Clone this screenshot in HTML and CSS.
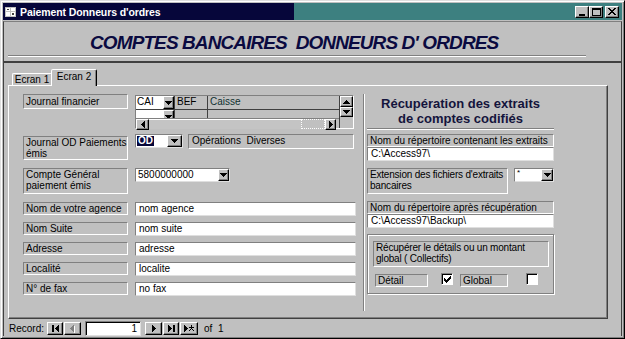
FILE: index.html
```html
<!DOCTYPE html>
<html lang="fr">
<head>
    <meta charset="UTF-8">
    <title>Paiement Donneurs d'ordres</title>
    <link rel="stylesheet" href="styles.css">
</head>
<body>

<div class="window">
    <!-- Barre de titre -->
    <div class="titlebar">
        <svg class="app-icon" width="11" height="10" viewBox="0 0 11 10" shape-rendering="crispEdges">
            <rect x="0" y="0" width="11" height="10" fill="#c0c0c0"/>
            <rect x="1" y="1" width="4" height="3" fill="#fff"/>
            <rect x="6" y="1" width="4" height="3" fill="#fff"/>
            <rect x="1" y="5" width="4" height="4" fill="#fff"/>
            <rect x="6" y="5" width="4" height="4" fill="#fff"/>
            <rect x="2" y="2" width="2" height="1" fill="#404040"/>
            <rect x="7" y="6" width="2" height="2" fill="#404040"/>
        </svg>
        <span class="title">Paiement Donneurs d'ordres</span>
        <div class="caption-btns">
            <span class="cbtn"><svg width="8" height="8" shape-rendering="crispEdges"><rect x="1" y="6" width="6" height="2"/></svg></span>
            <span class="cbtn"><svg width="9" height="8" shape-rendering="crispEdges"><path fill-rule="evenodd" d="M0 0h9v8H0zM1 2v5h7V2z"/></svg></span>
            <span class="cbtn close"><svg width="8" height="7" shape-rendering="crispEdges"><path d="M0 0h2v1h1v1h2v-1h1v-1h2v1h-1v1h-1v1h-1v1h1v1h1v1h1v1h-2v-1h-1v-1h-2v1h-1v1h-2v-1h1v-1h1v-1h1v-1h-1v-1h-1v-1h-1z"/></svg></span>
        </div>
    </div>

    <div class="client">
        <!-- En-tête du formulaire -->
        <div class="form-header">
            <h1>COMPTES BANCAIRES&nbsp; DONNEURS D' ORDRES</h1>
            <div class="etched-line"></div>
        </div>
        <div class="separator"></div>

        <!-- Détail -->
        <div class="detail">
            <div class="tabs">
                <div class="tab">Ecran 1</div>
                <div class="tab active">Ecran 2</div>
            </div>
            <div class="tab-panel">
                <div class="col-left">
                    <div class="row r-journal">
                        <div class="lbl lbl-tall">Journal financier</div>
                        <div class="datasheet">
                            <div class="ds-main">
                                <div class="ds-row">
                                    <div class="ds-code"><span class="ds-val">CAI</span><span class="ds-drop"><svg width="7" height="4" shape-rendering="crispEdges"><path d="M0 0h7v1h-1v1h-1v1h-1v1h-1v-1h-1v-1h-1v-1h-1z"/></svg></span></div>
                                    <div class="ds-dev">BEF</div>
                                    <div class="ds-lib">Caisse</div>
                                </div>
                                <div class="ds-row ds-blank">
                                    <div class="ds-code"><span class="ds-val"></span><span class="ds-drop"><svg width="7" height="4" shape-rendering="crispEdges"><path d="M0 0h7v1h-1v1h-1v1h-1v1h-1v-1h-1v-1h-1v-1h-1z"/></svg></span></div>
                                    <div class="ds-dev"></div>
                                    <div class="ds-lib"></div>
                                </div>
                                <div class="ds-hscroll">
                                    <span class="sb-btn sb-left"><svg width="4" height="7" shape-rendering="crispEdges"><path d="M3 0h1v7h-1v-1h-1v-1h-1v-1h-1v-1h1v-1h1v-1h1z"/></svg></span>
                                    <span class="sb-track"></span>
                                    <span class="sb-thumb"></span>
                                    <span class="sb-btn sb-right"><svg width="4" height="7" shape-rendering="crispEdges"><path d="M0 0h1v1h1v1h1v1h1v1h-1v1h-1v1h-1v1h-1z"/></svg></span>
                                </div>
                            </div>
                            <div class="ds-vscroll">
                                <span class="sb-btn sb-up"><svg width="7" height="4" shape-rendering="crispEdges"><path d="M3 0h1v1h1v1h1v1h1v1h-7v-1h1v-1h1v-1h1z"/></svg></span>
                                <span class="sb-btn sb-down"><svg width="7" height="4" shape-rendering="crispEdges"><path d="M0 0h7v1h-1v1h-1v1h-1v1h-1v-1h-1v-1h-1v-1h-1z"/></svg></span>
                            </div>
                        </div>
                    </div>

                    <div class="row r-od">
                        <div class="lbl lbl2">Journal OD Paiements émis</div>
                        <div class="combo c-od">
                            <span class="sel">OD</span>
                            <span class="drop"><svg width="7" height="4" shape-rendering="crispEdges"><path d="M0 0h7v1h-1v1h-1v1h-1v1h-1v-1h-1v-1h-1v-1h-1z"/></svg></span>
                        </div>
                        <div class="desc">Opérations&nbsp; Diverses</div>
                    </div>

                    <div class="row r-compte">
                        <div class="lbl lbl2">Compte Général paiement émis</div>
                        <div class="combo c-compte">
                            <span class="val">5800000000</span>
                            <span class="drop"><svg width="7" height="4" shape-rendering="crispEdges"><path d="M0 0h7v1h-1v1h-1v1h-1v1h-1v-1h-1v-1h-1v-1h-1z"/></svg></span>
                        </div>
                    </div>

                    <div class="row r-first">
                        <div class="lbl">Nom de votre agence</div>
                        <div class="field">nom agence</div>
                    </div>
                    <div class="row">
                        <div class="lbl">Nom Suite</div>
                        <div class="field">nom suite</div>
                    </div>
                    <div class="row">
                        <div class="lbl">Adresse</div>
                        <div class="field">adresse</div>
                    </div>
                    <div class="row">
                        <div class="lbl">Localité</div>
                        <div class="field">localite</div>
                    </div>
                    <div class="row">
                        <div class="lbl">N° de fax</div>
                        <div class="field">no fax</div>
                    </div>
                </div>

                <div class="divider"></div>

                <div class="col-right">
                    <h2>Récupération des extraits de comptes codifiés</h2>
                    <div class="etched-line short"></div>

                    <div class="lbl full mt4">Nom du répertoire contenant les extraits</div>
                    <div class="field full">C:\Access97\</div>

                    <div class="ext-row">
                        <div class="lbl lbl2 ext-lbl">Extension des fichiers d'extraits bancaires</div>
                        <div class="combo c-ext">
                            <span class="val star">*</span>
                            <span class="drop"><svg width="7" height="4" shape-rendering="crispEdges"><path d="M0 0h7v1h-1v1h-1v1h-1v1h-1v-1h-1v-1h-1v-1h-1z"/></svg></span>
                        </div>
                    </div>

                    <div class="lbl full mt7">Nom du répertoire après récupération</div>
                    <div class="field full">C:\Access97\Backup\</div>

                    <div class="group">
                        <div class="lbl lbl2 group-lbl">Récupérer le détails ou un montant global ( Collectifs)</div>
                        <div class="check-row">
                            <div class="lbl chk-lbl lbl-detail">Détail</div>
                            <span class="checkbox checked"><svg width="7" height="7" shape-rendering="crispEdges"><path d="M6 0h1v3h-1v1h-1v1h-1v1h-1v1h-1v-1h-1v-1h-1v-3h1v1h1v1h1v-1h1v-1h1v-1h1z"/></svg></span>
                            <div class="lbl chk-lbl lbl-global">Global</div>
                            <span class="checkbox cb-global"></span>
                        </div>
                    </div>
                </div>
            </div>
        </div>

        <!-- Navigation des enregistrements -->
        <div class="nav">
            <span class="nav-label">Record:</span>
            <span class="nbtn"><svg width="7" height="7" shape-rendering="crispEdges"><rect x="0" y="0" width="2" height="7"/><path d="M6 0h1v7h-1v-1h-1v-1h-1v-1h-1v-1h1v-1h1v-1h1z"/></svg></span>
            <span class="nbtn n-prev"><svg width="5" height="8" shape-rendering="crispEdges"><path fill="#fff" d="M4 1h1v7h-1v-1h-1v-1h-1v-1h-1v-1h1v-1h1v-1h1z"/><path fill="#808080" d="M3 0h1v7h-1v-1h-1v-1h-1v-1h-1v-1h1v-1h1v-1h1z"/></svg></span>
            <span class="nbox">1</span>
            <span class="nbtn n-next"><svg width="4" height="7" shape-rendering="crispEdges"><path d="M0 0h1v1h1v1h1v1h1v1h-1v1h-1v1h-1v1h-1z"/></svg></span>
            <span class="nbtn"><svg width="7" height="7" shape-rendering="crispEdges"><path d="M0 0h1v1h1v1h1v1h1v1h-1v1h-1v1h-1v1h-1z"/><rect x="5" y="0" width="2" height="7"/></svg></span>
            <span class="nbtn n-new"><svg width="10" height="7" shape-rendering="crispEdges"><path d="M0 0h1v1h1v1h1v1h1v1h-1v1h-1v1h-1v1h-1z"/><path d="M7 0h1v2h2v1h-2v1h1v1h1v1h-1v-1h-1v-1h-1v1h-1v1h-1v-1h1v-1h1v-1h-2v-1h2z"/></svg></span>
            <span class="nav-of">of&nbsp; 1</span>
        </div>
    </div>
</div>

</body>
</html>
```

FILE: styles.css
```css
* { margin: 0; padding: 0; box-sizing: border-box; }

body {
    background: #c0c0c0;
    font-family: "Liberation Sans", Arial, sans-serif;
    font-size: 10px;
    color: #000;
}

/* Fenêtre */
.window {
    width: 625px;
    height: 339px;
    padding: 2px;
    border: 1px solid;
    border-color: #dfdfdf #000 #000 #dfdfdf;
    box-shadow: inset 1px 1px #fff, inset -1px -1px #808080;
    display: flex;
    flex-direction: column;
}

.titlebar {
    height: 17px;
    flex: none;
    display: flex;
    align-items: center;
    padding: 0 3px 0 2px;
    background: linear-gradient(to right, #06063a 0, #06063a 291px, #3d8080 291px);
    color: #fff;
}
.app-icon { display: block; }
.title { margin-left: 4px; font-weight: bold; font-size: 10.5px; letter-spacing: -0.1px; }

.caption-btns { margin-left: auto; display: flex; }
.cbtn {
    width: 14px;
    height: 12px;
    display: flex;
    align-items: center;
    justify-content: center;
    background: #c0c0c0;
    border: 1px solid;
    border-color: #fff #000 #000 #fff;
    box-shadow: inset -1px -1px #808080;
}
.cbtn svg { display: block; }
.cbtn.close { margin-left: 2px; }

.client {
    flex: 1;
    margin-top: 1px;
    border-top: 1px solid #808080;
    border-left: 1px solid #404040;
    border-right: 1px solid #404040;
    display: flex;
    flex-direction: column;
}

/* En-tête */
.form-header { height: 39px; padding-top: 11px; }
.form-header h1 {
    padding-left: 86px;
    font-size: 19px;
    line-height: 19px;
    font-style: italic;
    font-weight: bold;
    letter-spacing: -0.9px;
    color: #0a0a40;
    white-space: nowrap;
}
.etched-line {
    height: 2px;
    border-top: 1px solid #808080;
    border-bottom: 1px solid #fff;
}
.form-header .etched-line { margin: 3px 0 0 4px; width: 578px; }
.separator { height: 2px; background: #404040; }

/* Détail + onglets */
.detail { padding-left: 4px; }
.tabs { margin-top: 6px; height: 16px; padding-left: 4px; display: flex; align-items: flex-end; }
.tab {
    width: 40px;
    height: 12px;
    line-height: 11px;
    text-align: center;
    border: 1px solid;
    border-bottom: none;
    border-color: #fff #404040 transparent #fff;
    border-radius: 2px 2px 0 0;
}
.tab.active {
    width: 46px;
    height: 17px;
    line-height: 13px;
    margin-left: -1px;
    margin-bottom: -1px;
    position: relative;
    z-index: 1;
    background: #c0c0c0;
    border-right-color: #000;
    box-shadow: inset -1px 0 #808080;
}

.tab-panel {
    width: 600px;
    height: 234px;
    border: 1px solid;
    border-color: #fff #404040 #404040 #fff;
    box-shadow: inset -1px -1px #808080;
    padding: 8px 0 0 14px;
    display: flex;
    align-items: flex-start;
}

/* Contrôles communs */
.lbl {
    flex: none;
    height: 13px;
    padding-left: 2px;
    line-height: 11px;
    border: 1px solid;
    border-color: #808080 #fff #fff #808080;
    white-space: nowrap;
    overflow: hidden;
}
.lbl2 { white-space: normal; }
.field {
    height: 14px;
    padding-left: 3px;
    line-height: 12px;
    background: #fff;
    border: 1px solid;
    border-color: #808080 #dfdfdf #dfdfdf #808080;
    white-space: nowrap;
}
.combo {
    height: 14px;
    display: flex;
    background: #fff;
    border: 1px solid;
    border-color: #808080 #dfdfdf #dfdfdf #808080;
    line-height: 12px;
}
.combo .val { padding-left: 2px; }
.combo .drop, .ds-drop, .sb-btn {
    margin-left: auto;
    flex: none;
    display: flex;
    align-items: center;
    justify-content: center;
    background: #c0c0c0;
    border: 1px solid;
    border-color: #fff #000 #000 #fff;
    box-shadow: inset -1px -1px #808080;
}
.combo .drop { width: 12px; height: 12px; }
.combo svg, .ds-drop svg, .sb-btn svg { display: block; }

/* Colonne gauche */
.col-left { width: 333px; flex: none; }
.row { display: flex; align-items: flex-start; }
.row .lbl { width: 105px; }
.row .field { width: 221px; margin-left: 7px; }
.row + .row { margin-top: 6px; }

.r-journal .lbl-tall { height: 15px; line-height: 13px; }
.datasheet {
    margin: 1px 0 0 7px;
    width: 219px;
    height: 34px;
    display: flex;
    background: #c0c0c0;
    border: 1px solid;
    border-color: #808080 #fff #fff #808080;
}
.ds-main { width: 204px; border-right: 1px solid #404040; }
.ds-row { height: 14px; display: flex; border-bottom: 1px solid #404040; }
.ds-row.ds-blank { height: 8px; border-bottom: none; overflow: hidden; }
.ds-code { width: 38px; display: flex; background: #fff; align-items: flex-start; }
.ds-val { padding-left: 1px; line-height: 12px; }
.ds-drop { width: 11px; height: 13px; }
.ds-dev { width: 33px; padding-left: 2px; line-height: 12px; border-left: 1px solid #404040; }
.ds-lib { flex: 1; padding-left: 2px; line-height: 12px; border-left: 1px solid #404040; color: #103030; }
.ds-hscroll { height: 11px; display: flex; border-top: 1px solid #808080; }
.ds-hscroll .sb-btn { width: 13px; height: 11px; margin-left: 0; }
.sb-track { flex: 1; background: #c4c4c4; border-top: 1px solid #fff; }
.sb-thumb { width: 24px; border: 1px dotted #fff; background: #c0c0c0; }
.ds-hscroll .sb-right { width: 11px; margin-right: 3px; }
.ds-vscroll { width: 13px; display: flex; flex-direction: column; }
.ds-vscroll .sb-btn { width: 13px; height: 11px; margin-left: 0; }
.ds-vscroll .sb-down { height: 10px; }

.r-journal + .r-od { margin-top: 5px; }
.r-od .lbl { margin-top: 2px; height: 24px; }
.c-od { width: 48px; margin-left: 7px; }
.c-od .sel { background: #06063a; color: #fff; padding: 0 1px; margin: 1px 0 0 1px; line-height: 10px; height: 10px; font-weight: bold; }
.c-od .drop { width: 15px; }
.desc {
    width: 166px;
    height: 15px;
    margin-left: 5px;
    padding-left: 3px;
    line-height: 12px;
    border: 1px solid;
    border-color: #808080 #fff #fff #808080;
}
.row.r-compte { margin-top: 8px; }
.r-compte .lbl { height: 26px; }
.c-compte { width: 95px; margin-left: 7px; }
.c-compte .drop { width: 11px; }
.row.r-first { margin-top: 8px; }

/* Séparateur vertical */
.divider {
    margin-left: 7px;
    width: 2px;
    height: 217px;
    border-left: 1px solid #808080;
    border-right: 1px solid #fff;
    flex: none;
}

/* Colonne droite */
.col-right { width: 187px; margin-left: 2px; flex: none; }
.col-right h2 {
    margin-top: 2px;
    padding: 0 6px;
    font-size: 13px;
    line-height: 15px;
    font-weight: bold;
    text-align: center;
    color: #14143c;
}
.etched-line.short { margin-top: 2px; }
.full { width: 100%; }
.mt4 { margin-top: 4px; }
.mt7 { margin-top: 7px; }

.ext-row { margin-top: 7px; display: flex; align-items: flex-start; }
.ext-lbl { width: 141px; height: 26px; letter-spacing: -0.2px; }
.c-ext { width: 40px; margin-left: 6px; }
.c-ext .star { font-size: 8px; line-height: 8px; }

.group {
    margin-top: 6px;
    height: 60px;
    padding: 6px 0 0 5px;
    border: 1px solid #808080;
    box-shadow: 1px 1px #fff, inset 1px 1px #fff;
}
.group-lbl { width: 176px; height: 26px; letter-spacing: -0.2px; }
.check-row { margin-top: 7px; display: flex; align-items: flex-start; }
.chk-lbl { height: 13px; }
.lbl-detail { margin-left: 2px; width: 53px; }
.lbl-global { margin-left: 7px; width: 48px; }
.checkbox {
    width: 12px;
    height: 12px;
    margin-top: -1px;
    display: flex;
    align-items: center;
    justify-content: center;
    background: #fff;
    border: 1px solid;
    border-color: #808080 #fff #fff #808080;
    box-shadow: inset 1px 1px #000;
}
.checkbox svg { display: block; margin: 1px 0 0 1px; }
.checked { margin-left: 13px; }
.cb-global { margin-left: 18px; }

/* Barre de navigation */
.nav { margin-top: 2px; height: 15px; display: flex; align-items: center; padding-left: 5px; }
.nav-label { width: 38px; }
.nbtn {
    width: 16px;
    height: 13px;
    display: flex;
    align-items: center;
    justify-content: center;
    background: #c0c0c0;
    border: 1px solid;
    border-color: #fff #000 #000 #fff;
    box-shadow: inset -1px -1px #808080;
}
.nbtn svg { display: block; }
.nbtn + .nbtn { margin-left: 1px; }
.n-prev { width: 17px; }
.nbox {
    width: 56px;
    height: 15px;
    margin-left: 4px;
    padding-right: 3px;
    line-height: 13px;
    text-align: right;
    background: #fff;
    border: 1px solid;
    border-color: #808080 #dfdfdf #dfdfdf #808080;
    box-shadow: inset 1px 1px #000;
}
.n-next { width: 17px; margin-left: 4px; }
.n-new { width: 18px; }
.nav-of { margin-left: 6px; }
```
